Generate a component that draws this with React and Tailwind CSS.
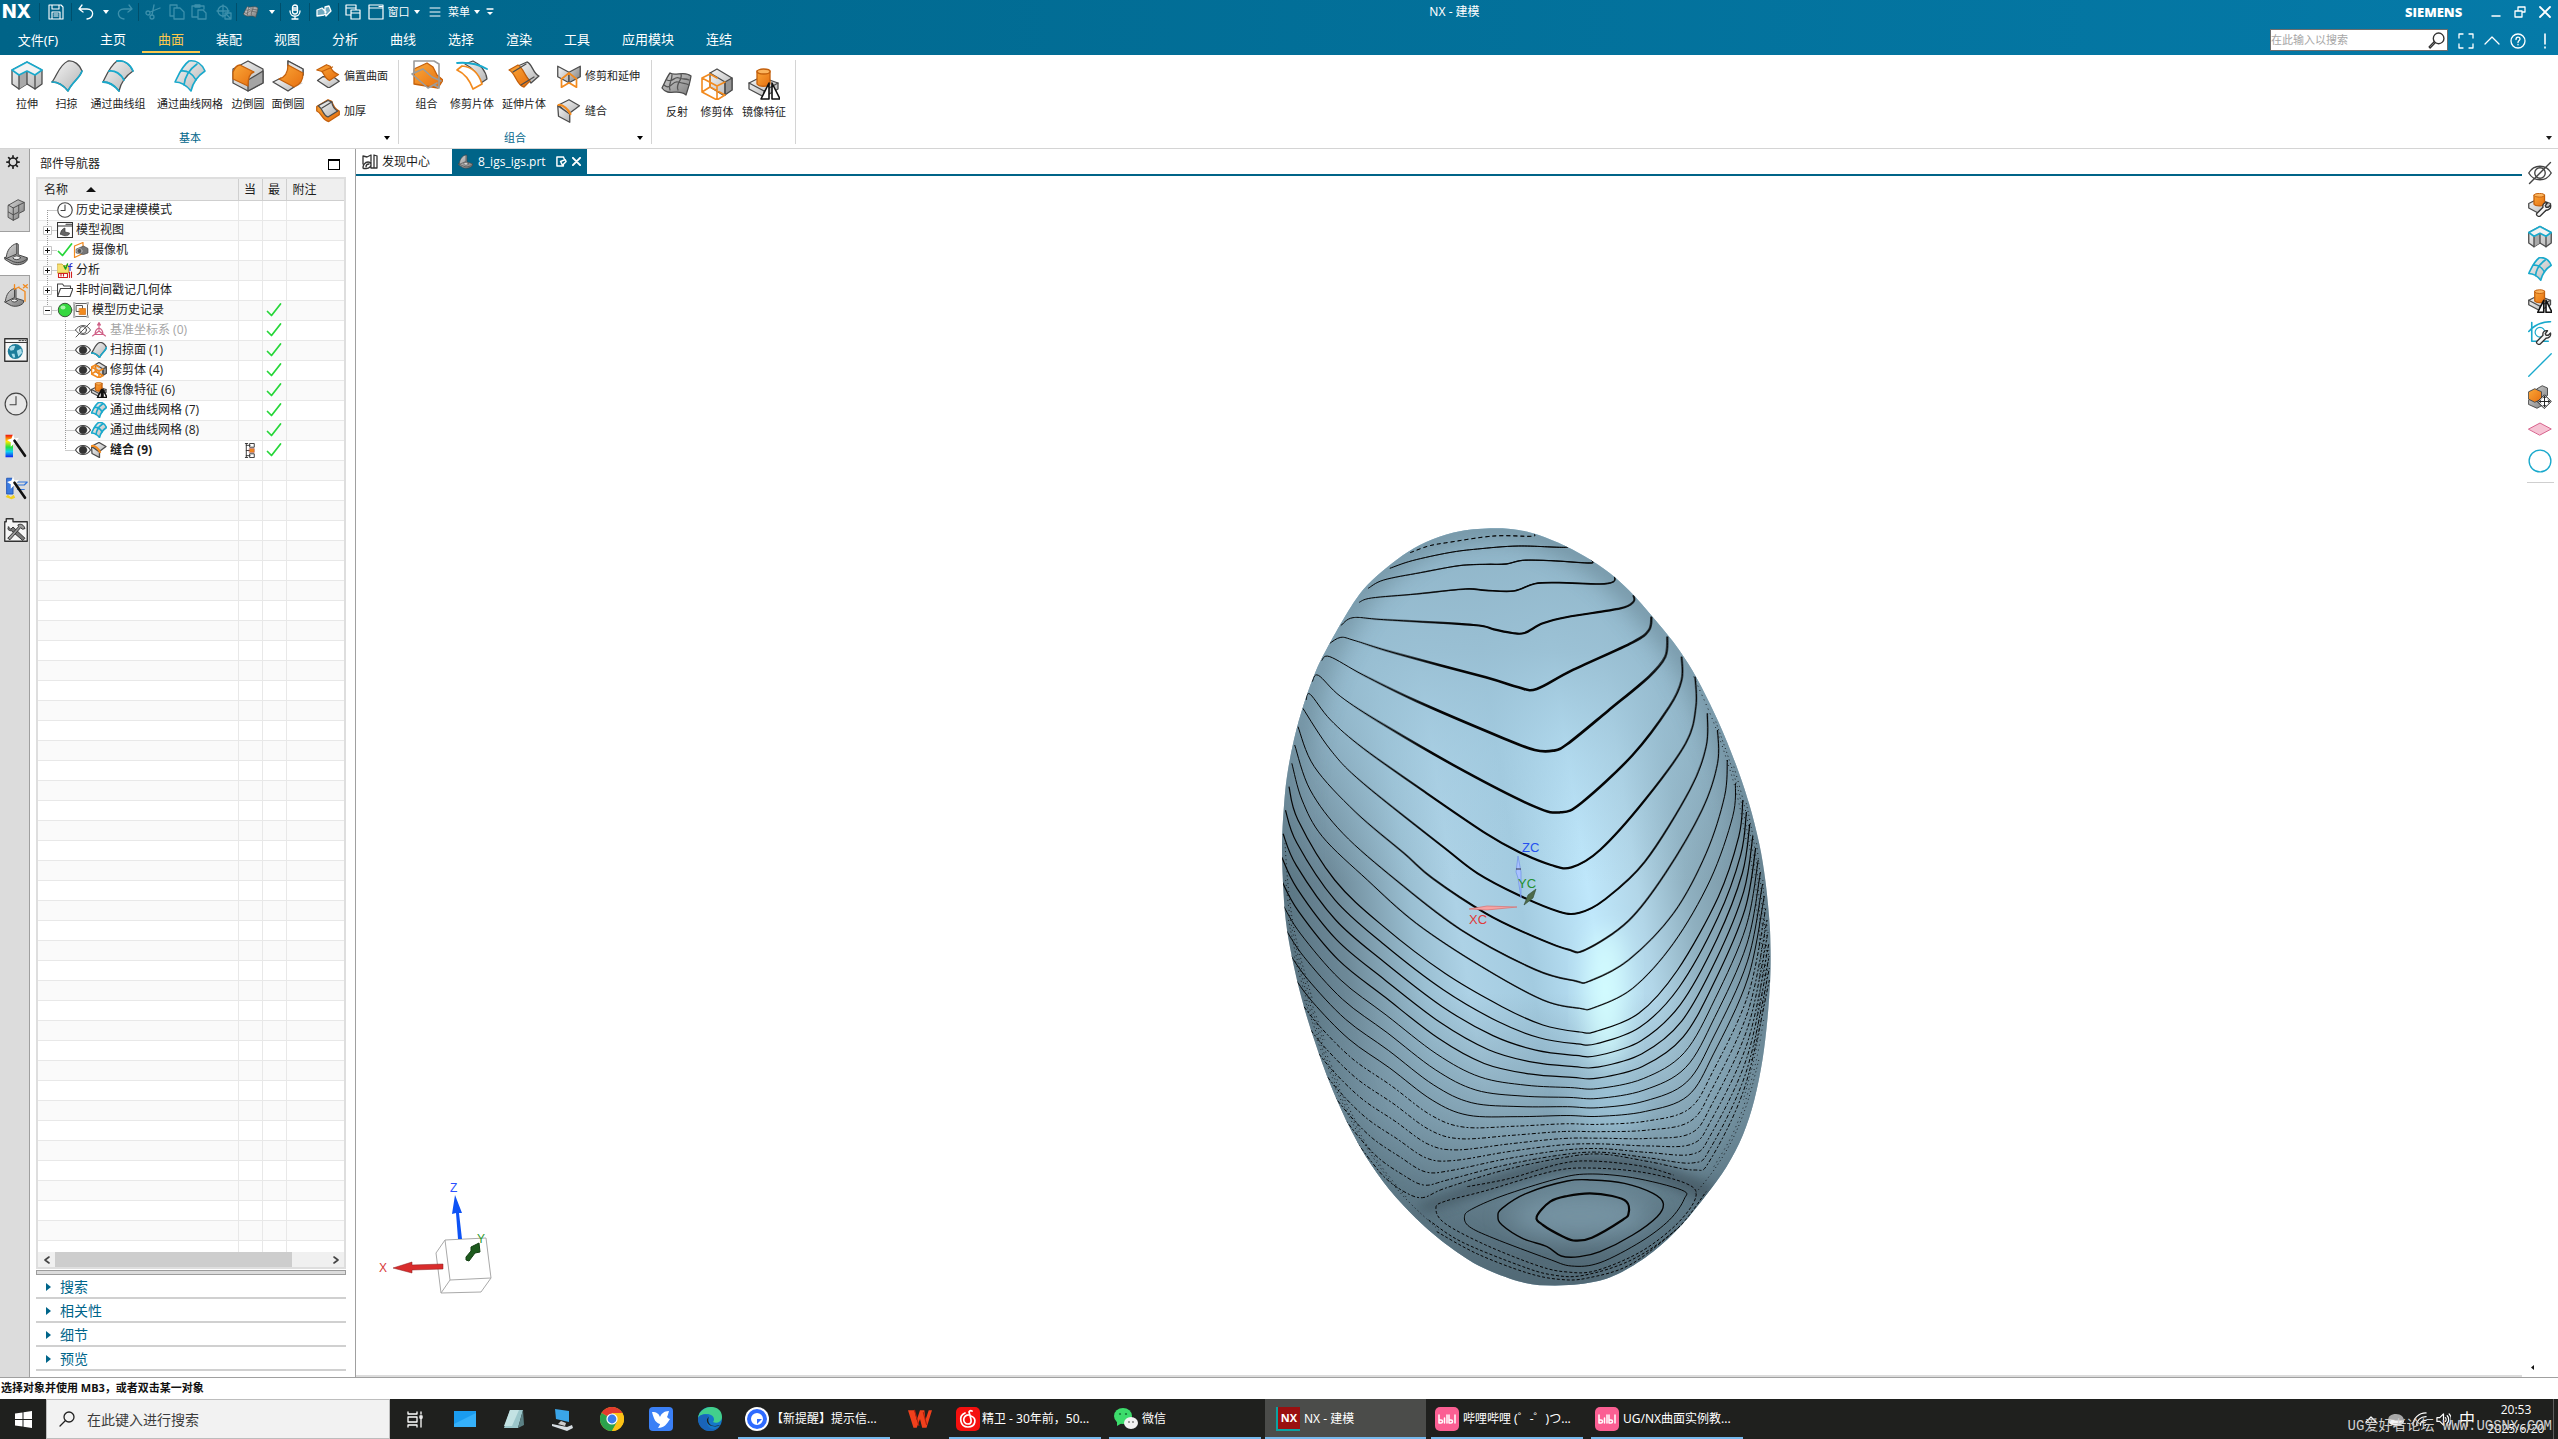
import React from "react";

const DK = "#4c4c4c";
const CY = "#19a9cc";
const OR = "#f28a1e";
const CRISP = "[&_path]:[vector-effect:non-scaling-stroke]";

/* ---------- shared drawing helpers ---------- */

function Svg({ size = 32, w, h, box = 32, children, className = "" }) {
  return (
    <svg
      width={w || size}
      height={h || size}
      viewBox={`0 0 ${box} ${box}`}
      fill="none"
      strokeLinejoin="round"
      strokeLinecap="round"
      strokeWidth="1.3"
      className={`shrink-0 ${className}`}
      aria-hidden="true"
    >
      {children}
    </svg>
  );
}

function Defs() {
  return (
    <svg width="0" height="0" className="absolute" aria-hidden="true">
      <defs>
        <linearGradient id="gg" x1="0" y1="0" x2="1" y2="1">
          <stop offset="0" stopColor="#f6f6f6" />
          <stop offset="1" stopColor="#b4b4b4" />
        </linearGradient>
        <linearGradient id="gd" x1="0" y1="0" x2="1" y2="1">
          <stop offset="0" stopColor="#d5d5d5" />
          <stop offset="1" stopColor="#7c7c7c" />
        </linearGradient>
        <linearGradient id="go" x1="0" y1="0" x2="1" y2="1">
          <stop offset="0" stopColor="#fba738" />
          <stop offset="1" stopColor="#e66f10" />
        </linearGradient>
        <linearGradient id="rain" x1="0" y1="0" x2="0" y2="1">
          <stop offset="0" stopColor="#f01010" />
          <stop offset="0.3" stopColor="#ffe600" />
          <stop offset="0.55" stopColor="#20e040" />
          <stop offset="0.75" stopColor="#10d0f0" />
          <stop offset="1" stopColor="#1020f0" />
        </linearGradient>
      </defs>
    </svg>
  );
}

/* ---------- modelling icons ---------- */

const Extrude = (p) => (
  <Svg {...p}>
    <path d="M1 10L16 2l15 8v14l-7 5-8-5-8 5-7-5z" fill="url(#gg)" stroke={DK} />
    <path d="M8 15l8-4v13l-8 5z" fill="#a9a9a9" />
    <path d="M16 11v13M8 15v14M24 15v14" stroke={DK} />
    <path d="M1 10L16 2l15 8-7 5-8-4-8 4z" fill="#f3f3f3" stroke={CY} strokeWidth="1.6" />
  </Svg>
);
const Sweep = (p) => (
  <Svg {...p}>
    <path d="M1 22C6 16 8 5 17 1c6-1 12 4 14 10-2 7-10 11-14 20-4-5-9-9-16-9z" fill="url(#gg)" stroke={DK} />
    <path d="M1 22c7 0 12 4 16 9C21 22 29 18 31 11" stroke={CY} strokeWidth="1.6" />
  </Svg>
);
const ThroughCurves = (p) => (
  <Svg {...p}>
    <path d="M1 22C5 14 8 6 15 1c7-1 13 3 16 10-6 4-12 11-14 20C13 26 8 22 1 22z" fill="url(#gg)" stroke={DK} />
    <path d="M15 1c7-1 13 3 16 10M7 11c6-1 12 3 15 9M1 22c7 0 12 4 16 9" stroke={CY} strokeWidth="1.8" />
  </Svg>
);
const Mesh = (p) => (
  <Svg {...p}>
    <path d="M1 22C5 14 8 6 15 1c7-1 13 3 16 10-6 4-12 11-14 20C13 26 8 22 1 22z" fill="url(#gg)" stroke={CY} strokeWidth="1.6" />
    <path d="M7 11c6-1 12 3 15 9M23 4c-7 5-12 12-13 21" stroke={CY} strokeWidth="1.6" />
  </Svg>
);
const EdgeBlend = (p) => (
  <Svg {...p}>
    <path d="M1 9L16 1l15 8v14l-15 8-15-8z" fill="url(#gg)" stroke={DK} />
    <path d="M16 31V20l15-9v12z" fill="#a4a4a4" stroke={DK} />
    <path d="M1 12c2-5 4-7 7-7l14 7c-4 1-6 5-6 14L1 19z" fill="url(#go)" stroke="#c4600c" />
  </Svg>
);
const FaceBlend = (p) => (
  <Svg {...p}>
    <path d="M16 19l15 4-15 8-15-8 7-4z" fill="url(#gg)" stroke="none" />
    <path d="M16 6V1l15 8v6M1 22l15 9 6-4M1 22l8-4" stroke={DK} />
    <path d="M16 1l15 8v6L16 6z" fill="#e4e4e4" stroke={DK} />
    <path d="M16 5c0 7-2 12-9 14l15 8c7-3 9-7 9-14z" fill="url(#go)" stroke="#c4600c" />
  </Svg>
);
const Offset = (p) => (
  <Svg {...p}>
    <path d="M2 22l7-5 14 0 8 6-14 9z" fill="url(#gg)" stroke={DK} />
    <path d="M1 8l13-7 5 2c2 6 5 9 11 11l-12 8c-6-2-6-7-10-12z" fill="url(#go)" stroke="#c4600c" />
    <path d="M8 10l14-6" stroke="#c4600c" />
  </Svg>
);
const Thicken = (p) => (
  <Svg {...p}>
    <path d="M1 10L16 1l5 2c2 7 5 11 10 13v5l-14 9c-9-2-9-11-16-14z" fill="url(#go)" stroke="#c4600c" />
    <path d="M3 9L16 2l5 2c1 6 4 10 8 12l-13 8C9 22 10 14 3 9z" fill="url(#gg)" stroke={DK} />
    <path d="M8 12l13-8" stroke={DK} />
  </Svg>
);
const Combine = (p) => (
  <Svg {...p}>
    <path d="M3 9l13-6 6 4 4 8 6 5-5 8-24-4z" fill="url(#go)" stroke="#c4600c" />
    <path d="M3 1h20l5 3v24l-5-3M3 1v12L1 14l8 7 8 7 9-5M3 13l9-4 9 8 9 4" stroke="#9b9b9b" strokeWidth="1.6" />
  </Svg>
);
const TrimSheet = (p) => (
  <Svg {...p}>
    <path d="M9 4l8-3c7 3 13 10 14 18l-6 4C22 14 17 8 9 4z" fill="url(#gg)" stroke={DK} />
    <path d="M1 10l5-4c11 1 17 8 20 18l-9 5C14 21 10 14 1 10z" fill="#fff" stroke={OR} strokeWidth="1.7" />
    <path d="M1 3c11-1 21 1 30 6" stroke={CY} strokeWidth="1.8" />
  </Svg>
);
const ExtendSheet = (p) => (
  <Svg {...p}>
    <path d="M10 6l9-4c5 1 6 12 12 14l-8 7z" fill="url(#gg)" stroke={DK} />
    <path d="M1 10l9-5c5 2 7 12 12 16l-6 6C8 25 8 13 1 10z" fill="url(#go)" stroke="#c4600c" />
    <path d="M5 12l13-8M13 25l13-8" stroke={DK} />
  </Svg>
);
const TrimExtend = (p) => (
  <Svg {...p}>
    <path d="M1 3l15 8v14L1 17z" fill="url(#gg)" stroke={DK} />
    <path d="M31 3l-15 8v14l15-8z" fill="url(#gd)" stroke={DK} />
    <path d="M6 20l10-8 10 8v11l-10-6-10 6z" stroke={OR} strokeWidth="1.7" />
  </Svg>
);
const Sew = (p) => (
  <Svg {...p}>
    <path d="M2 8L16 1l14 8-12 9-3 2z" fill="url(#gg)" stroke={DK} />
    <path d="M1 9l16 11v11L2 23z" fill="url(#gg)" stroke={DK} />
    <path d="M2 8c6-1 13 6 16 12" stroke={OR} strokeWidth="2.2" />
  </Svg>
);
const Reflect = (p) => (
  <Svg {...p}>
    <path d="M1 20C4 14 6 9 9 5c5 4 14-3 21 3-1 7-3 13-5 19C18 20 7 29 1 20z" fill="url(#gd)" stroke={DK} />
    <path d="M3 17c7 6 8-5 14-3s7 1 11 3M6 12c6 3 7-4 12-2s6 0 10 2M11 7c0 6-4 10-2 15M20 6c2 6-6 10-3 16" stroke="#555" />
  </Svg>
);
const TrimBody = (p) => (
  <Svg {...p}>
    <path d="M9 5l7-4 15 9v12l-9 5L9 19z" fill="url(#gg)" stroke={DK} />
    <path d="M24 14l7-4v12l-7 5z" fill="#969696" stroke={DK} />
    <path d="M9 5l15 9v13" stroke={DK} />
    <path d="M1 10l8-4 7 4v0M1 10l15 8 8-4M1 10v14l15 8 8-5M16 18v14M9 19v-9M1 24l8-5 15 8" stroke={OR} strokeWidth="1.6" />
  </Svg>
);
const Mirror = (p) => (
  <Svg {...p}>
    <path d="M1 15l12-6 17 6v6l-14 8-15-8z" fill="url(#gg)" stroke={DK} />
    <path d="M1 15l15 8 14-8M16 23v6" stroke={DK} />
    <path d="M9 3v13c2 3 11 3 13 0V3z" fill="url(#go)" stroke="#c4600c" />
    <ellipse cx="15.500" cy="3.500" rx="6.500" ry="2.500" fill="#fbb45c" stroke="#c4600c" />
    <path d="M21 15v16h-8zM24 15v16h8z" fill="#fff" stroke="#111" strokeWidth="1.6" />
  </Svg>
);
const Wrench = ({ x = 0, y = 0 }) => (
  <path
    transform={`translate(${x} ${y})`}
    d="M1 15l8-8c-1-4 2-7 6-6l-3 4 1 2 3 0 3-3c1 4-2 7-6 7l-8 8c-3 1-6-2-4-4z"
    fill="#f6f6f6"
    stroke="#333"
  />
);
const FeatureWrench = (p) => (
  <Svg {...p}>
    <path d="M1 14l12-6 17 6v6l-14 8-15-8z" fill="url(#gg)" stroke={DK} />
    <path d="M8 3v12c2 3 12 3 14 0V3z" fill="url(#go)" stroke="#c4600c" />
    <ellipse cx="15" cy="3" rx="7" ry="2.500" fill="#fbb45c" stroke="#c4600c" />
    <Wrench x={11} y={12} />
  </Svg>
);
const SketchWrench = (p) => (
  <Svg {...p}>
    <path d="M5 2v25h22M1 14C8 6 18 1 30 1" stroke={CY} strokeWidth="1.6" />
    <circle cx="16" cy="15" r="6.500" stroke={CY} strokeWidth="1.6" />
    <Wrench x={11} y={12} />
  </Svg>
);
const MoveFace = (p) => (
  <Svg {...p}>
    <path d="M1 20l8-4 12 4v6l-9 5-11-5zM12 5l7-4 7 3v10l-8 4z" fill="url(#gd)" stroke={DK} />
    <path d="M1 9l8-4 9 4v10l-9 4-8-4z" fill="url(#go)" stroke={DK} />
    <path d="M13 22l9-9 9 9-9 9z" fill="#fff" stroke="#222" />
    <path d="M22 15v14M15 22h14M20 17l2-2 2 2M20 27l2 2 2-2M17 20l-2 2 2 2M27 20l2 2-2 2" stroke="#222" />
  </Svg>
);
const EyeOff = ({ size = 24 }) => (
  <Svg size={size}>
    <path d="M1 16C8 4 24 4 31 16 24 28 8 28 1 16z" fill="#fff" stroke="#444" strokeWidth="1.8" />
    <circle cx="16" cy="16" r="7" stroke="#444" strokeWidth="1.8" />
    <path d="M30 2L2 30" stroke="#444" strokeWidth="1.8" />
  </Svg>
);
const Eye = () => (
  <Svg size={16}>
    <path d="M1 16C8 4 24 4 31 16 24 28 8 28 1 16z" fill="#fff" stroke="#444" strokeWidth="2.2" />
    <circle cx="16" cy="16" r="7.500" fill="#333" stroke="#333" />
  </Svg>
);
const Bracket = (p) => (
  <Svg {...p}>
    <path d="M3 20C4 11 9 4 17 2l2 1v14l12 4v3c-4 7-16 8-22 4l-8-5v-2z" fill="url(#gd)" stroke="#444" />
    <path d="M17 2v14L3 22M31 22c-5 6-15 7-21 3L1 21" stroke="#444" />
    <ellipse cx="17" cy="21" rx="5" ry="2.500" fill="#eee" stroke="#444" />
  </Svg>
);
const Datum = () => (
  <Svg size={16}>
    <path d="M16 2v16M16 18L3 28M16 18l13 10M16 1l-3 5h6zM16 12c-5 2-8 8-8 13h16c0-5-3-11-8-13" stroke="#cf5f86" strokeWidth="2.200" />
  </Svg>
);
const Check = () => (
  <Svg size={16}>
    <path d="M3 19l8 8L29 4" stroke="#27d63a" strokeWidth="3.500" />
  </Svg>
);
const Clock = ({ size = 16 }) => (
  <Svg size={size}>
    <circle cx="16" cy="16" r="14.500" stroke="#444" strokeWidth={size > 16 ? 1.5 : 2.2} fill="#ffffff55" />
    <path d="M16 6v11H8" stroke="#444" strokeWidth={size > 16 ? 1.5 : 2.2} />
  </Svg>
);

/* ---------- title bar ---------- */

const W = "#fff";
const DIM = "#3c90ac";
const Sep = () => <span className="h-[18px] w-px bg-[#004f6c]" />;
const Caret = ({ className = "w-3" }) => (
  <span className={`flex justify-center ${className}`}>
    <svg width="6" height="4" viewBox="0 0 6 4" aria-hidden="true">
      <path d="M0 0h6L3 4z" fill="currentColor" />
    </svg>
  </span>
);
function Tool({ className, label, children }) {
  return (
    <button type="button" aria-label={label} className={`flex h-6 items-center justify-center ${className}`}>
      {children}
    </button>
  );
}

function TitleBar() {
  return (
    <div className="flex h-6 items-center text-[11px]">
      <span className="w-[39px] pl-[2px] font-['Inter'] text-[19px] font-extrabold leading-6">NX</span>
      <Sep />
      <Tool label="保存" className="w-[31px]">
        <Svg size={16} box={16}><path d="M1 1h12l2 2v12H1zM4 1v4h7V1M4 8h8v7H4zM6 10h4M6 12h4" stroke={W} strokeWidth="1.100" /></Svg>
      </Tool>
      <Sep />
      <Tool label="撤销" className="w-7">
        <Svg size={16} box={16}><path d="M4 1L1 5l4 3M1 5h8c8 0 7 9 0 10" stroke={W} /></Svg>
      </Tool>
      <Caret className="w-3" />
      <Tool label="重做" className="w-[26px]">
        <Svg size={16} box={16}><path d="M12 1l3 4-4 3M15 5H7c-8 0-7 9 0 10" stroke={DIM} /></Svg>
      </Tool>
      <Sep />
      <Tool label="剪切" className="w-7">
        <Svg size={16} box={16}><path d="M15 4L5 8M9 1L7 11" stroke={DIM} /><circle cx="3" cy="9" r="2" stroke={DIM} /><circle cx="7" cy="13" r="2" stroke={DIM} /></Svg>
      </Tool>
      <Tool label="复制" className="w-5">
        <Svg size={16} box={16}><path d="M5 12H1V1h7v3M5 4h6l4 4v7H5z" stroke={DIM} /></Svg>
      </Tool>
      <Tool label="粘贴" className="w-6">
        <Svg size={16} box={16}><path d="M6 13H1V2h12v3M4 2V1h5v2H4zM7 6h5l3 3v6H7z" stroke={DIM} /></Svg>
      </Tool>
      <Tool label="重复命令" className="w-[25px]">
        <Svg size={16} box={16}><circle cx="7" cy="7" r="5" stroke={DIM} /><path d="M7 1v12M1 7h12M9 9h6v6H9zM11 11l3 3" stroke={DIM} /></Svg>
      </Tool>
      <Sep />
      <Tool label="反射" className="w-[27px]"><Reflect size={16} /></Tool>
      <Caret className="w-4" />
      <Sep />
      <Tool label="语音" className="w-7">
        <Svg size={16} box={16}><rect x="5.500" y="1" width="5" height="9" rx="2.500" stroke={W} /><path d="M3 7c0 7 10 7 10 0M8 12v3M5 15h6M6 4h4M6 6h4" stroke={W} /></Svg>
      </Tool>
      <Sep />
      <Tool label="触控" className="w-7">
        <Svg size={16} box={16}><path d="M1 6l5-2 4 4-2 3-7 1zM9 3l4-1 2 5-5 5-1-4z" fill="#6fa9c0" stroke={W} /></Svg>
      </Tool>
      <Sep />
      <Tool label="切换窗口" className="w-7">
        <Svg size={16} box={16}><path d="M5 11H1V1h10v5M1 4h10M6 6h9v9H6zM6 9h9" stroke={W} strokeWidth="1.200" /></Svg>
      </Tool>
      <button type="button" className="flex h-6 items-center">
        <span className="flex w-[18px] justify-center">
          <Svg size={16} box={16}><path d="M1 1h14v14H1zM1 4h14M11 2.500h3" stroke={W} strokeWidth="1.200" /></Svg>
        </span>
        <span className="w-[27px] text-center">窗口</span>
        <Caret className="w-[10px]" />
      </button>
      <button type="button" className="flex h-6 items-center">
        <span className="flex w-[26px] justify-center">
          <Svg size={12} box={12}><path d="M1 2h10M1 6h10M1 10h10" stroke={W} strokeWidth="1" /></Svg>
        </span>
        <span className="w-[22px]">菜单</span>
        <Caret className="w-[14px]" />
      </button>
      <Tool label="工具条选项" className="w-3">
        <Svg size={8} box={8}><path d="M1 1h6" stroke={W} /><path d="M1 4h6L4 7z" fill={W} /></Svg>
      </Tool>
      <div className="flex-1 pl-2 text-center text-[12px]">NX - 建模</div>
      <span className="w-[79px] font-['Open_Sans'] text-[13px] font-extrabold leading-5">SIEMENS</span>
      <Tool label="最小化" className="w-6">
        <Svg size={10} box={10}><path d="M1 9h8" stroke={W} strokeWidth="1.500" /></Svg>
      </Tool>
      <Tool label="还原" className="w-6">
        <Svg size={12} box={12}><path d="M4 4V1h7v5H9M1 5h7v6H1z" stroke={W} /></Svg>
      </Tool>
      <Tool label="关闭" className="w-[26px]">
        <Svg size={12} box={12}><path d="M1 1l10 10M11 1L1 11" stroke={W} strokeWidth="1.800" /></Svg>
      </Tool>
    </div>
  );
}

function MenuTabs() {
  const tabs = ["主页", "曲面", "装配", "视图", "分析", "曲线", "选择", "渲染", "工具", "应用模块", "连结"];
  return (
    <nav className="flex h-[31px] text-[13px]">
      <button type="button" className="h-[29px] w-[84px] pr-2 pt-1">文件(F)</button>
      {tabs.map((t) => (
        <button
          key={t}
          type="button"
          className={`h-[29px] border-b-2 pt-1 ${t.length > 2 ? "w-[84px]" : "w-[58px]"} ${
            t === "曲面" ? "border-[#fcc84c] text-[#fcc84c]" : "border-transparent"
          }`}
        >
          {t}
        </button>
      ))}
      <div className="ml-auto flex items-start pt-[5px]">
        <label className="flex h-[22px] w-[178px] items-center border border-[#6d6d6d] bg-white pr-[2px]">
          <input
            aria-label="搜索命令"
            placeholder="在此输入以搜索"
            className="w-full min-w-0 flex-1 bg-transparent text-[11px] leading-4 text-black outline-none placeholder:text-[#a6a6a6]"
          />
          <Svg size={17} box={16}><circle cx="10" cy="6" r="5" stroke="#333" /><path d="M6 9l-5 5 1 1 5-5" stroke="#333" /></Svg>
        </label>
        <Tool label="全屏" className="ml-1 w-7">
          <Svg size={16} box={16}><path d="M1 5V1h4M11 1h4v4M15 11v4h-4M5 15H1v-4" stroke={W} /></Svg>
        </Tool>
        <Tool label="折叠功能区" className="w-6">
          <Svg size={16} box={16}><path d="M1 11l7-7 7 7" stroke={W} /></Svg>
        </Tool>
        <Tool label="帮助" className="w-7">
          <Svg size={16} box={16}><circle cx="8" cy="8" r="7" stroke={W} /><path d="M6 6.500c0-3 4-3 4-.5 0 1.500-2 1.500-2 3.500M8 11.500v.3" stroke={W} /></Svg>
        </Tool>
        <Tool label="通知" className="w-[26px]">
          <Svg size={16} box={16}><path d="M8 1v10M8 14v1" stroke={W} strokeWidth="1.600" /></Svg>
        </Tool>
      </div>
    </nav>
  );
}

/* ---------- ribbon ---------- */

function Big({ icon: Icon, label, className }) {
  return (
    <button type="button" className={`flex shrink-0 flex-col items-center ${className}`}>
      <Icon size={32} />
      <span className="mt-1 whitespace-nowrap leading-4">{label}</span>
    </button>
  );
}
function Small({ icon: Icon, label }) {
  return (
    <button type="button" className="flex h-[35px] items-center gap-1">
      <Icon size={24} className={CRISP} />
      <span className="whitespace-nowrap leading-4">{label}</span>
    </button>
  );
}
function Group({ title, className, children, top = "pt-0" }) {
  return (
    <section className={`relative flex h-[84px] flex-col border-r border-[#d4d4d4] ${className}`}>
      <div className={`flex flex-1 items-start ${top}`}>{children}</div>
      {title && (
        <div className="flex h-3 items-center leading-4 text-[#00658a]">
          <span className="flex-1 text-center">{title}</span>
          <button type="button" aria-label={`${title}选项`} className="absolute bottom-0 right-[8px] h-3 text-black">
            <Caret className="w-[6px]" />
          </button>
        </div>
      )}
    </section>
  );
}

function Ribbon() {
  return (
    <div className="flex h-[94px] items-start border-b border-[#d4d4d4] bg-white pt-[5px] text-[11px] text-[#1c1c1c]">
      <Group title="基本" className="w-[399px] pl-[9px] pr-[27px]">
        <Big icon={Extrude} label="拉伸" className="w-9" />
        <Big icon={Sweep} label="扫掠" className="w-[43px]" />
        <Big icon={ThroughCurves} label="通过曲线组" className="w-[60px]" />
        <Big icon={Mesh} label="通过曲线网格" className="w-[84px]" />
        <Big icon={EdgeBlend} label="边倒圆" className="w-8" />
        <Big icon={FaceBlend} label="面倒圆" className="w-12" />
        <div className="-mt-[2px] ml-1 flex shrink-0 flex-col">
          <Small icon={Offset} label="偏置曲面" />
          <Small icon={Thicken} label="加厚" />
        </div>
      </Group>
      <Group title="组合" className="w-[253px] pl-[7px] pr-[27px]">
        <Big icon={Combine} label="组合" className="w-[41px]" />
        <Big icon={TrimSheet} label="修剪片体" className="w-[50px]" />
        <Big icon={ExtendSheet} label="延伸片体" className="w-[54px]" />
        <div className="-mt-[2px] ml-[6px] flex shrink-0 flex-col">
          <Small icon={TrimExtend} label="修剪和延伸" />
          <Small icon={Sew} label="缝合" />
        </div>
      </Group>
      <Group className="w-[144px] pl-[7px]" top="pt-2">
        <Big icon={Reflect} label="反射" className="w-9" />
        <Big icon={TrimBody} label="修剪体" className="w-[44px]" />
        <Big icon={Mirror} label="镜像特征" className="w-[50px]" />
      </Group>
      <button type="button" aria-label="功能区选项" className="ml-auto mt-[76px] pr-[6px]">
        <Caret className="w-[6px]" />
      </button>
    </div>
  );
}

/* ---------- left resource rail ---------- */

function RailButton({ label, className, active, children }) {
  return (
    <button
      type="button"
      aria-label={label}
      className={`flex w-[30px] shrink-0 items-center justify-center ${active ? "border-y border-[#a0a0a0] bg-white pl-px" : "border-r border-[#a0a0a0]"} ${className}`}
    >
      {children}
    </button>
  );
}
const RailGap = ({ className }) => <span className={`w-[30px] border-r border-[#a0a0a0] ${className}`} />;
const Wand = () => <path d="M14 9l14 20" stroke="#111" strokeWidth="3.500" />;
const Spark = () => <path d="M12 0l2 6 6-1-4 5 3 5-6-2-4 4 0-6-5-3 6-2z" fill="#fff" />;

function Rail() {
  return (
    <div className="flex w-[30px] shrink-0 flex-col bg-[#dcdcdc]">
      <RailButton label="设置" className="h-[26px] pr-1">
        <Svg size={14} box={16}>
          <circle cx="8" cy="8" r="4.500" stroke="#222" strokeWidth="1.800" />
          <path d="M8 1v2M8 13v2M1 8h2M13 8h2M3 3l1.500 1.500M11.500 11.500L13 13M3 13l1.500-1.500M11.500 4.500L13 3" stroke="#222" strokeWidth="2" />
        </Svg>
      </RailButton>
      <RailGap className="h-[14px]" />
      <RailButton label="装配导航器" className="h-[42px] pl-[2px]">
        <Svg size={22}>
          <path d="M5 9l14-8 9 4v12l-8 4v6l-8 4-7-4z" fill="url(#gd)" stroke="#444" />
          <path d="M5 9l7 4 16-8M12 13v18M5 19l7 4 8-4V9" stroke="#444" />
        </Svg>
      </RailButton>
      <RailButton label="部件导航器" active className="h-[45px]"><Bracket size={24} /></RailButton>
      <RailButton label="约束导航器" className="h-10 pl-[2px]">
        <Svg size={24}>
          <path d="M2 22C3 14 7 8 14 6l2 1v12l10 3v3c-4 5-13 6-18 3l-7-4z" fill="url(#gd)" stroke="#444" />
          <path d="M14 6v12L2 24" stroke="#444" />
          <ellipse cx="14" cy="22" rx="4" ry="2" fill="#eee" stroke="#444" />
          <path d="M14 1v6l6-3M20 5l8 5v13M26 1l5 4M31 1l-5 4" stroke={OR} strokeWidth="1.800" />
        </Svg>
      </RailButton>
      <RailGap className="h-3" />
      <RailButton label="Web 浏览器" className="h-11 pl-[2px]">
        <Svg size={24}>
          <path d="M1 1h30v30H1z" fill="#f6f6f6" stroke="#333" strokeWidth="1.800" />
          <path d="M1 6h30M20 3.500h2M24 3.500h2M28 3.500h1" stroke="#333" />
          <circle cx="15" cy="18" r="10" fill="#1c7c9a" />
          <path d="M7 14c3-4 6-4 8-3l-2 5-4 1zM17 17l6-3 1 6-5 5zM10 21l4 0 1 5-3 0z" fill="#a8dcea" />
        </Svg>
      </RailButton>
      <RailGap className="h-[10px]" />
      <RailButton label="历史记录" className="h-11 pl-[2px]"><Clock size={24} /></RailButton>
      <RailButton label="加工向导" className="h-10 pl-[2px]">
        <Svg size={24}>
          <rect x="2" y="1" width="10" height="30" fill="url(#rain)" stroke="none" />
          <Spark /><Wand />
        </Svg>
      </RailButton>
      <RailButton label="流程向导" className="h-11 pl-[2px]">
        <Svg size={24}>
          <path d="M4 3h8v21H4z" fill="#3b7be0" stroke="#2458b8" />
          <path d="M16 8h15l-4 4h-9M18 18h9" stroke="#2f74dc" strokeWidth="1.600" />
          <path d="M2 28l3-3 4 3 4-3 2 4-5 2z" fill="#f0d020" />
          <Spark /><Wand />
        </Svg>
      </RailButton>
      <RailButton label="角色" className="h-10 pl-[2px]">
        <Svg size={24}>
          <path d="M1 5h2V1h9v4h19v26H1z" fill="#f6f6f6" stroke="#333" strokeWidth="1.800" />
          <path d="M6 12l3 3 3-3 16 15-3 3L10 17c-4 0-6-2-4-5z" fill="#777" stroke="#333" />
          <path d="M19 9c4-2 7 0 9 5l-3 1-3-2L8 29l-3-2 14-15z" fill="#999" stroke="#333" />
        </Svg>
      </RailButton>
      <RailGap className="flex-1" />
    </div>
  );
}

/* ---------- part navigator ---------- */

const ViewsIcon = () => (
  <Svg size={16}>
    <path d="M1 1h30v30H1zM1 8h30M18 4.500h11" fill="#fff" stroke="#333" strokeWidth="2.200" />
    <path d="M7 24c0-6 4-11 9-12v8l9 2c0 6-10 8-18 2z" fill="#666" stroke="#333" />
  </Svg>
);
const CameraIcon = () => (
  <Svg size={16}>
    <path d="M3 8L20 1v22L3 31z" fill="#fff" stroke={OR} strokeWidth="2.400" />
    <path d="M7 14l14-6 9 5v9l-9 3-14-3z" fill="#777" stroke="#444" />
    <circle cx="13" cy="18" r="5" fill="#555" stroke="#ccc" />
  </Svg>
);
const AnalysisIcon = () => (
  <Svg size={16}>
    <path d="M1 4h9l3 3h10v15H1z" fill="#f7e070" stroke="#b89010" />
    <path d="M14 8l3 6 4-10" stroke="#1aa01a" strokeWidth="3" />
    <path d="M30 3c-5 0-4 4-4 14M23 9h7" stroke="#2030d0" strokeWidth="2.400" />
    <path d="M3 23h18v8H3zM8 23v5M13 23v5M25 20v11M29 20v11" stroke="#d02020" strokeWidth="2.200" />
  </Svg>
);
const FolderIcon = () => (
  <Svg size={16}>
    <path d="M1 29V4h10l3 4h13v5M1 29l6-16h25l-6 16z" stroke="#444" strokeWidth="2.200" />
  </Svg>
);
const HistoryIcon = () => (
  <Svg size={16}>
    <path d="M3 3h26v26H3z" stroke="#555" strokeWidth="1.800" />
    <path d="M0 0h5v5H0zM27 0h5v5h-5zM0 27h5v5H0zM27 27h5v5h-5z" fill="#bbb" stroke="none" />
    <path d="M7 7h12v12H7z" stroke="#555" strokeWidth="2" />
    <path d="M13 13h12v12H13z" fill={OR} stroke="#d06a08" />
  </Svg>
);
const GreenBall = () => (
  <Svg size={16}>
    <circle cx="16" cy="16" r="13.500" fill="#35d83f" stroke="#3b5a3b" strokeWidth="2" />
    <ellipse cx="12" cy="11" rx="5" ry="4" fill="#a8f5a8" />
  </Svg>
);

/* Dotted guide lines of the tree, with an optional expander box. */
function Guide({ up, down, box }) {
  return (
    <svg width="19" height="20" viewBox="0 0 19 20" className="shrink-0" aria-hidden="true">
      <path
        d={`${up ? "M9.500 0V10" : ""}${down ? "M9.500 10V20" : ""}M9.500 10.500H19`}
        stroke="#999"
        strokeDasharray="1 1"
        fill="none"
      />
      {box && (
        <>
          <path d="M5.500 6.500h8v8h-8z" fill="#fff" stroke="#c4c4c4" />
          <path d={box === "+" ? "M7 10.500h5M9.500 8v5" : "M7 10.500h5"} stroke="#111" />
        </>
      )}
    </svg>
  );
}

const rows = [
  { t: "历史记录建模模式", g: { down: true }, i: [Clock] },
  { t: "模型视图", g: { up: true, down: true, box: "+" }, i: [ViewsIcon] },
  { t: "摄像机", g: { up: true, down: true, box: "+" }, i: [Check, CameraIcon] },
  { t: "分析", g: { up: true, down: true, box: "+" }, i: [AnalysisIcon] },
  { t: "非时间戳记几何体", g: { up: true, down: true, box: "+" }, i: [FolderIcon] },
  { t: "模型历史记录", g: { up: true, box: "-" }, i: [GreenBall, HistoryIcon], ok: true },
  { t: "基准坐标系 (0)", sub: true, i: [EyeOff, Datum], ok: true, off: true },
  { t: "扫掠面 (1)", sub: true, i: [Eye, Sweep], ok: true },
  { t: "修剪体 (4)", sub: true, i: [Eye, TrimBody], ok: true },
  { t: "镜像特征 (6)", sub: true, i: [Eye, Mirror], ok: true },
  { t: "通过曲线网格 (7)", sub: true, i: [Eye, Mesh], ok: true },
  { t: "通过曲线网格 (8)", sub: true, i: [Eye, Mesh], ok: true },
  { t: "缝合 (9)", sub: true, i: [Eye, Sew], ok: true, bold: true, last: true },
];

function Navigator() {
  const blanks = Array.from({ length: 40 });
  return (
    <aside className="flex w-[326px] shrink-0 flex-col border-r border-[#a0a0a0] bg-white pl-[6px] pr-[9px] text-[12px] text-[#1c1c1c]">
      <header className="flex h-7 items-center justify-between pl-1 pr-[6px] pt-[2px]">
        <h2>部件导航器</h2>
        <button type="button" aria-label="最大化" className="h-[11px] w-3 border border-t-2 border-black" />
      </header>
      <div className="flex min-h-0 flex-1 flex-col border-2 border-[#dedede]">
        <div className="min-h-0 flex-1 basis-0 overflow-hidden">
          <table className="w-full table-fixed border-collapse">
            <colgroup>
              <col className="w-[200px]" />
              <col className="w-6" />
              <col className="w-6" />
              <col />
            </colgroup>
            <thead>
              <tr className="h-[21px] border-b border-[#cfcfcf] bg-[#efefef] text-left">
                <th className="border-r border-[#cfcfcf] pl-[6px] pt-px font-normal leading-4">
                  <span className="flex items-center gap-[18px]">
                    名称
                    <svg width="10" height="5" viewBox="0 0 10 5" aria-hidden="true"><path d="M0 5h10L5 0z" fill="#111" /></svg>
                  </span>
                </th>
                <th className="border-r border-[#cfcfcf] pt-px text-center font-normal leading-4">当</th>
                <th className="border-r border-[#cfcfcf] pt-px text-center font-normal leading-4">最</th>
                <th className="pl-[6px] pt-px font-normal leading-4">附注</th>
              </tr>
            </thead>
            <tbody>
              {rows.map((r) => (
                <tr key={r.t} className="h-5 border-b border-[#e8e8e8] even:bg-[#fafafa]">
                  <td className="border-r border-[#e8e8e8] p-0">
                    <div className="flex h-[19px] items-center">
                      {r.sub ? <span className="w-[18px]" /> : <Guide {...r.g} />}
                      {r.sub && <Guide up down={!r.last} />}
                      {r.i.map((Ic, n) => (
                        <Ic key={n} size={16} className={CRISP} />
                      ))}
                      <span
                        className={`ml-[3px] whitespace-nowrap font-['Open_Sans','Noto_Sans_CJK_SC'] leading-4 ${r.off ? "text-[#a5a5a5]" : ""} ${r.bold ? "font-bold" : ""}`}
                      >
                        {r.t}
                      </span>
                    </div>
                  </td>
                  <td className="border-r border-[#e8e8e8] p-0">
                    {r.bold && (
                      <span className="flex justify-center">
                        <Svg size={15}>
                          <path d="M7 1v30M7 5h8M7 16h8M7 27h8M15 1h9v8h-9zM15 23h9v8h-9zM5 1h5M5 31h5" stroke="#333" strokeWidth="2" />
                          <path d="M14 12h10v8H14z" fill={OR} stroke="#a55" />
                        </Svg>
                      </span>
                    )}
                  </td>
                  <td className="border-r border-[#e8e8e8] p-0">
                    <span className="flex justify-center">{r.ok && <Check />}</span>
                  </td>
                  <td className="p-0" />
                </tr>
              ))}
              {blanks.map((_, n) => (
                <tr key={n} className="h-5 border-b border-[#e8e8e8] even:bg-[#fafafa]">
                  <td className="border-r border-[#e8e8e8] p-0" />
                  <td className="border-r border-[#e8e8e8] p-0" />
                  <td className="border-r border-[#e8e8e8] p-0" />
                  <td className="p-0" />
                </tr>
              ))}
            </tbody>
          </table>
        </div>
        <div className="flex h-[15px] shrink-0 items-stretch bg-[#f0f0f0]">
          <button type="button" aria-label="向左滚动" className="flex w-[17px] items-center justify-center">
            <Svg size={8} box={8}><path d="M6 1L2 4l4 3" stroke="#444" strokeWidth="1.600" /></Svg>
          </button>
          <div className="flex-1"><div className="h-full w-[87%] bg-[#cdcdcd]" /></div>
          <button type="button" aria-label="向右滚动" className="flex w-[17px] items-center justify-center">
            <Svg size={8} box={8}><path d="M2 1l4 3-4 3" stroke="#444" strokeWidth="1.600" /></Svg>
          </button>
        </div>
      </div>
      <div className="mt-px h-[5px] shrink-0 border border-[#9c9c9c] bg-[#dcdcdc]" />
      {["搜索", "相关性", "细节", "预览"].map((s) => (
        <button
          key={s}
          type="button"
          className="flex h-6 shrink-0 items-center gap-[9px] border-b-2 border-[#d0d0d0] pl-[10px] pt-[2px] text-[14px] leading-5 text-[#00658a]"
        >
          <svg width="5" height="8" viewBox="0 0 5 8" aria-hidden="true"><path d="M0 0l5 4-5 4z" fill="#00658a" /></svg>
          {s}
        </button>
      ))}
      <div className="h-[6px] shrink-0" />
    </aside>
  );
}

/* ---------- reflection-analysed body ---------- */

const outline = [
  [720, 85], [780, 90], [830, 105], [895, 138], [960, 182], [1015, 230], [1062, 285], [1105, 345], [1165, 435], [1215, 530],
  [1270, 665], [1315, 800], [1345, 910], [1370, 1030], [1385, 1140], [1395, 1260], [1398, 1350], [1397, 1440], [1390, 1560],
  [1378, 1680], [1358, 1800], [1330, 1905], [1290, 2000], [1240, 2085], [1180, 2175], [1110, 2255], [1030, 2318], [960, 2347],
  [870, 2357], [790, 2347], [700, 2307], [640, 2265], [560, 2190], [480, 2092], [420, 1995], [370, 1890], [320, 1755],
  [280, 1620], [250, 1500], [225, 1370], [210, 1260], [203, 1140], [201, 1030], [205, 930], [213, 830], [230, 720], [255, 610],
  [285, 510], [320, 425], [370, 320], [410, 255], [460, 200], [510, 155], [570, 118], [640, 93],
];

const bands = [
  { w: 1, d: "4 3", p: [[515, 158], [560, 138], [610, 127], [720, 108], [810, 109], [820, 103]] },
  { w: 1, p: [[465, 205], [520, 182], [610, 158], [680, 147], [780, 138], [895, 142], [890, 132]] },
  { w: 1.3, p: [[412, 265], [450, 240], [540, 218], [635, 197], [700, 193], [750, 192], [790, 181], [860, 182], [950, 189], [962, 184], [948, 168]] },
  { w: 1.6, p: [[390, 307], [420, 294], [530, 282], [650, 267], [700, 271], [768, 273], [820, 251], [880, 248], [980, 252], [1013, 245], [1016, 230]] },
  { w: 2.2, p: [[345, 377], [375, 353], [450, 359], [670, 375], [720, 388], [765, 399], [795, 399], [840, 370], [900, 351], [1030, 325], [1062, 305], [1062, 286]] },
  { w: 2.6, p: [[318, 430], [345, 412], [380, 422], [480, 460], [700, 532], [780, 562], [825, 567], [910, 512], [1060, 427], [1100, 390], [1106, 350]] },
  { w: 2.7, p: [[298, 482], [318, 470], [400, 525], [530, 603], [740, 713], [820, 750], [865, 752], [900, 732], [1000, 632], [1100, 530], [1140, 470], [1145, 410]] },
  { w: 2.5, p: [[275, 545], [290, 526], [345, 590], [450, 674], [650, 815], [820, 920], [883, 937], [935, 908], [1060, 765], [1150, 620], [1180, 540], [1180, 470]] },
  { w: 2.2, p: [[260, 600], [270, 583], [320, 660], [400, 745], [550, 875], [700, 1000], [780, 1055], [860, 1095], [910, 1102], [980, 1050], [1090, 900], [1190, 730], [1215, 620], [1213, 530]] },
  { w: 2, p: [[252, 625], [320, 750], [400, 850], [600, 1045], [680, 1120], [780, 1185], [880, 1235], [930, 1238], [990, 1200], [1090, 1085], [1200, 870], [1240, 740], [1243, 640]] },
  { w: 2, p: [[240, 680], [280, 800], [380, 935], [500, 1060], [570, 1135], [700, 1240], [800, 1300], [900, 1348], [945, 1349], [1050, 1262], [1140, 1120], [1230, 930], [1268, 790], [1268, 690]] },
  { w: 1.8, p: [[232, 735], [270, 870], [350, 1000], [480, 1140], [640, 1290], [820, 1408], [920, 1443], [955, 1443], [1050, 1380], [1160, 1240], [1240, 1060], [1285, 890], [1292, 780]] },
  { w: 1.6, p: [[225, 790], [250, 900], [300, 1010], [410, 1140], [530, 1270], [690, 1400], [840, 1500], [930, 1525], [965, 1523], [1060, 1465], [1160, 1330], [1250, 1140], [1305, 950], [1312, 850]] },
];

/* The lower bands blend from the first curve into the last one. */
const bandA = [[218, 860], [240, 960], [330, 1140], [450, 1280], [600, 1420], [740, 1520], [840, 1575], [930, 1596], [970, 1594], [1075, 1540], [1170, 1410], [1270, 1190], [1320, 1010], [1330, 900]];
const bandB = [[380, 1920], [420, 1985], [455, 2035], [500, 2075], [545, 2093], [600, 2065], [740, 2012], [880, 1975], [980, 1962], [1100, 1985], [1210, 2010], [1250, 1980], [1335, 1760], [1395, 1440]];
const STEPS = 15;
const lower = Array.from({ length: STEPS + 1 }, (_, k) => {
  const t = k / STEPS;
  const mid = 1 - Math.pow(1 - t, 1.55);
  return bandA.map(([x, y], i) => {
    const c = Math.max(0, 1 - Math.abs(i - 8) / 5);
    const u = t + (mid - t) * c;
    const bulge = 4 * t * (1 - t) * (i === 0 ? -78 : i === 1 ? -60 : i === 2 ? -32 : i === 3 ? -12 : i === 13 ? 18 : i === 12 ? 14 : 0);
    return [x + (bandB[i][0] - x) * u + bulge, y + (bandB[i][1] - y) * u];
  });
});

/* Tightly packed bands near the silhouette. */
const edgeL = Array.from({ length: 7 }, (_, k) => {
  const y0 = 950 + k * 120;
  const p = outline.filter(([x, y]) => x < 620 && y > y0 && y < y0 + 560).map(([x, y]) => [x + 4 + (y - y0) * 0.04, y]);
  return p.reverse();
});
const edgeR = Array.from({ length: 10 }, (_, k) => {
  const y0 = 500 + k * 120;
  return outline.filter(([x, y]) => x > 1100 && y > y0 && y < y0 + 560).map(([x, y]) => [x - 4 - (y - y0) * 0.05, y]);
});

const rings = [
  { w: 2.2, p: [[825, 2150], [858, 2105], [900, 2088], [955, 2080], [1010, 2088], [1045, 2105], [1050, 2140], [1035, 2160], [960, 2213], [920, 2222], [890, 2210], [840, 2175]] },
  { w: 1.4, p: [[730, 2150], [740, 2125], [800, 2080], [900, 2043], [960, 2040], [1040, 2050], [1110, 2080], [1135, 2110], [1120, 2150], [1060, 2205], [980, 2255], [930, 2270], [885, 2268], [850, 2240], [790, 2215], [740, 2175]] },
  { w: 1, p: [[648, 2150], [665, 2128], [740, 2088], [870, 2038], [950, 2022], [1060, 2033], [1180, 2070], [1186, 2098], [1150, 2160], [1080, 2225], [980, 2288], [910, 2298], [850, 2275], [720, 2215], [660, 2180]] },
  { w: 1, d: "3 2", p: [[578, 2125], [600, 2104], [700, 2072], [860, 2015], [950, 2004], [1080, 2016], [1190, 2050], [1215, 2090], [1170, 2170], [1080, 2255], [970, 2312], [900, 2316], [830, 2298], [700, 2235], [600, 2170]] },
];
const feet = [
  [[560, 2160], [640, 2225], [780, 2295], [860, 2324], [940, 2326], [1060, 2278], [1170, 2185], [1240, 2075]],
  [[580, 2195], [680, 2262], [800, 2318], [880, 2338], [950, 2334], [1060, 2290], [1190, 2165]],
  [[655, 2060], [760, 2035], [880, 1992], [960, 1983], [1080, 1998], [1160, 2025]],
];

function smooth(p, closed) {
  const n = p.length;
  const at = (i) => (closed ? p[(i + n) % n] : p[Math.min(n - 1, Math.max(0, i))]);
  let d = `M${p[0][0]} ${p[0][1]}`;
  const end = closed ? n : n - 1;
  for (let i = 0; i < end; i++) {
    const [a, b, c, e] = [at(i - 1), at(i), at(i + 1), at(i + 2)];
    const f = (v) => Math.round(v * 10) / 10;
    d += `C${f(b[0] + (c[0] - a[0]) / 6)} ${f(b[1] + (c[1] - a[1]) / 6)} ${f(c[0] - (e[0] - b[0]) / 6)} ${f(c[1] - (e[1] - b[1]) / 6)} ${f(c[0])} ${f(c[1])}`;
  }
  return closed ? d + "Z" : d;
}

function Body() {
  const shape = smooth(outline, true);
  const ve = { vectorEffect: "non-scaling-stroke" };
  return (
    <svg width="640" height="810" viewBox="0 0 1568 2430" preserveAspectRatio="none" fill="none" aria-label="实体模型" role="img">
      <defs>
        <clipPath id="egg"><path d={shape} /></clipPath>
        <linearGradient id="hz" gradientUnits="userSpaceOnUse" x1="200" y1="1400" x2="1400" y2="1250">
          <stop offset="0" stopColor="#5a7482" />
          <stop offset="0.130" stopColor="#6d8998" />
          <stop offset="0.280" stopColor="#9abfd2" />
          <stop offset="0.370" stopColor="#add2e6" />
          <stop offset="0.500" stopColor="#a3cbe0" />
          <stop offset="0.640" stopColor="#bfe7fb" />
          <stop offset="0.740" stopColor="#b2d6e8" />
          <stop offset="0.840" stopColor="#8fb0c0" />
          <stop offset="1" stopColor="#6f8a98" />
        </linearGradient>
        <linearGradient id="topv" gradientUnits="userSpaceOnUse" x1="0" y1="85" x2="0" y2="1150">
          <stop offset="0" stopColor="#8fb4c7" />
          <stop offset="0.350" stopColor="#98bed2" stopOpacity="0.900" />
          <stop offset="0.650" stopColor="#a0c8dd" stopOpacity="0.450" />
          <stop offset="1" stopColor="#a4cce1" stopOpacity="0" />
        </linearGradient>
        <linearGradient id="botv" gradientUnits="userSpaceOnUse" x1="0" y1="1480" x2="0" y2="2357">
          <stop offset="0" stopColor="#7f9dad" stopOpacity="0" />
          <stop offset="0.400" stopColor="#7694a4" stopOpacity="0.700" />
          <stop offset="0.650" stopColor="#627d8b" stopOpacity="0.950" />
          <stop offset="1" stopColor="#4e6470" />
        </linearGradient>
        <radialGradient id="core" gradientUnits="userSpaceOnUse" cx="0" cy="0" r="1" gradientTransform="translate(830 760) scale(480 1000)">
          <stop offset="0" stopColor="#fff" />
          <stop offset="0.550" stopColor="#fff" />
          <stop offset="1" stopColor="#000" />
        </radialGradient>
        <mask id="coreMask" maskUnits="userSpaceOnUse" x="0" y="0" width="1568" height="2430">
          <rect width="1568" height="2430" fill="url(#core)" />
        </mask>
        <filter id="b30" x="-60%" y="-60%" width="220%" height="220%"><feGaussianBlur stdDeviation="34" /></filter>
        <filter id="b14" x="-30%" y="-60%" width="160%" height="220%"><feGaussianBlur stdDeviation="16" /></filter>
      </defs>
      <g clipPath="url(#egg)">
        <rect width="1568" height="2430" fill="url(#hz)" />
        <rect width="1568" height="1160" fill="url(#topv)" />
        <rect y="1480" width="1568" height="950" fill="url(#botv)" />
        <path d={shape} stroke="#587380" strokeWidth="60" opacity="0.600" filter="url(#b30)" />
        <ellipse cx="995" cy="1490" rx="42" ry="210" fill="#d6ffff" filter="url(#b30)" />
        <ellipse cx="1000" cy="1820" rx="90" ry="80" fill="#a2cbe0" opacity="0.600" filter="url(#b30)" />
        <path d="M540 2110C700 2030 840 1960 960 1958s200 40 300 100v60c-90-50-190-100-300-105s-270 70-420 130z" fill="#455963" opacity="0.800" filter="url(#b14)" />
        <ellipse cx="930" cy="2150" rx="170" ry="70" fill="#7f9eae" opacity="0.700" filter="url(#b30)" />
        <g stroke="#050505" strokeLinejoin="round">
          {bands.map((b, i) => (
            <path key={i} d={smooth(b.p)} strokeWidth="1" strokeDasharray={b.d} style={ve} />
          ))}
          <g mask="url(#coreMask)">
            {bands.map((b, i) => (
              <path key={i} d={smooth(b.p)} strokeWidth={b.w} strokeDasharray={b.d} style={ve} />
            ))}
          </g>
          {lower.map((p, i) => (
            <path key={i} d={smooth(p)} strokeWidth={i < 5 ? 1.2 : 1} strokeDasharray={i > 8 ? "4 2 2 2" : undefined} style={ve} />
          ))}
          {rings.map((r, i) => (
            <path key={i} d={smooth(r.p, true)} strokeWidth={r.w} strokeDasharray={r.d} style={ve} />
          ))}
          {feet.map((p, i) => (
            <path key={i} d={smooth(p)} strokeWidth="1" strokeDasharray="3 2" style={ve} />
          ))}
          {[...edgeL, ...edgeR].filter((p) => p.length > 2).map((p, i) => (
            <path key={i} d={smooth(p)} strokeWidth="1" strokeDasharray={i % 2 ? "1 4" : "1 3"} opacity="0.8" style={ve} />
          ))}
        </g>
      </g>
    </svg>
  );
}

function Wcs() {
  return (
    <svg width="80" height="90" viewBox="0 0 80 90" fontSize="13" fontFamily="Liberation Sans, sans-serif" aria-hidden="true">
      <path d="M54 15l3 16v26l-3-20-2-6z" fill="#a9c2ff" stroke="#6f8fe8" strokeWidth="0.700" />
      <path d="M52 28h5" stroke="#334" />
      <path d="M5 68l18-3 30 1-30 3z" fill="#f5a3a3" stroke="#d97070" strokeWidth="0.700" />
      <path d="M60 64l4-10 8-6-3 9z" fill="#4c6a4a" stroke="#334a33" strokeWidth="0.600" />
      <text x="58" y="11" fill="#2450f0">ZC</text>
      <text x="54" y="47" fill="#259030">YC</text>
      <text x="5" y="83" fill="#e03a3a">XC</text>
    </svg>
  );
}

function Triad() {
  return (
    <svg width="130" height="125" viewBox="370 1175 130 125" fontSize="12" fontFamily="Liberation Sans, sans-serif" fill="none" aria-hidden="true">
      <path d="M445 1240l41-2 5 40-41 2zM445 1240l-9 13 5 40 40-1 10-14M450 1280l-9 13" stroke="#a9a9a9" />
      <path d="M458 1239l-2-26-4 1 3-19 7 18-3 0 3 26z" fill="#0d52f5" />
      <path d="M443 1264v5l-31 1v3l-19-5 19-6v3z" fill="#d92c2c" stroke="#8a1a1a" strokeWidth="0.500" />
      <path d="M466 1257l5-6v-4l8-4 1 9-5 1-6 8-3-1z" fill="#1d5a1d" stroke="#123f12" />
      <text x="450" y="1192" fill="#2a50ff">Z</text>
      <text x="379" y="1272" fill="#d83a3a">X</text>
      <text x="477" y="1243" fill="#2e9a2e">Y</text>
    </svg>
  );
}

function Viewport() {
  return (
    <main className="flex min-w-0 flex-1 flex-col bg-white">
      <div className="flex h-[27px] items-stretch border-b-2 border-[#006488] text-[12px] text-[#1c1c1c]">
        <button type="button" className="flex w-[96px] items-center gap-1 pl-[6px]">
          <Svg size={16} box={16}>
            <path d="M1 2l4 1 4-2v6M15 2l-3-1v13M1 2v8M1 14c0-3 2-6 5-6s4 3 2 5-6 2-7 1zM4 13c0-2 1-3 3-3M9 8v6h6V2" stroke="#333" />
          </Svg>
          发现中心
        </button>
        <div className="flex w-[135px] items-center bg-[#006488] pl-[6px] text-white">
          <Bracket size={15} />
          <button type="button" className="ml-[5px] mr-[5px] w-[73px] text-left font-['Open_Sans'] text-[12px]">8_igs_igs.prt</button>
          <Svg size={11} box={12}><path d="M8 1H1v10h7V9M8 1l1 2M5 6l5-2 1 2-4 4z" stroke="#fff" strokeWidth="1.600" /></Svg>
          <button type="button" aria-label="关闭部件" className="ml-[5px]">
            <Svg size={9} box={10}><path d="M1 1l8 8M9 1L1 9" stroke="#fff" strokeWidth="2.200" /></Svg>
          </button>
        </div>
      </div>
      <div className="relative flex-1 overflow-hidden border-b-2 border-[#dcdcdc]">
        <div className="absolute left-[844px] top-[324px]"><Body /></div>
        <div className="absolute left-[1108px] top-[665px]"><Wcs /></div>
        <div className="absolute bottom-[75px] left-[14px]"><Triad /></div>
      </div>
    </main>
  );
}

/* ---------- right tool strip ---------- */

function Strip() {
  const items = [
    ["隐藏", <EyeOff />],
    ["编辑参数", <FeatureWrench size={24} className={CRISP} />],
    ["拉伸", <Extrude size={24} className={CRISP} />],
    ["通过曲线网格", <Mesh size={24} className={CRISP} />],
    ["镜像特征", <Mirror size={24} className={CRISP} />],
    ["编辑草图", <SketchWrench size={24} className={CRISP} />],
    ["直线", <Svg size={24}><path d="M1 31L31 1" stroke={CY} strokeWidth="1.800" /></Svg>],
    ["移动面", <MoveFace size={24} />],
    ["基准平面", <Svg size={24}><path d="M1 16l15-8 15 8-15 8z" fill="#f6c3d4" stroke="#d65f8a" /></Svg>],
    ["圆", <Svg size={24}><circle cx="16" cy="16" r="14.500" stroke={CY} strokeWidth="1.800" /></Svg>],
  ];
  return (
    <div className="flex w-9 shrink-0 flex-col items-center bg-white">
      <div className="h-[27px] w-full shrink-0 pt-2" />
      <div className="-mt-[19px] flex w-full flex-col items-center">
        {items.map(([label, icon]) => (
          <button key={label} type="button" aria-label={label} className="flex h-8 w-full items-center justify-center">
            {icon}
          </button>
        ))}
        <span className="mt-[5px] h-px w-[27px] bg-[#cfcfcf]" />
      </div>
      <button type="button" aria-label="展开" className="mb-[7px] mr-[16px] mt-auto">
        <svg width="3" height="5" viewBox="0 0 3 5" aria-hidden="true"><path d="M3 0v5L0 2.500z" fill="#111" /></svg>
      </button>
    </div>
  );
}

/* ---------- desktop task bar ---------- */

function Task({ icon, label, pad = "pl-[7px]", width = "w-[152px]", gap = "gap-1", active }) {
  return (
    <button
      type="button"
      className={`flex h-10 shrink-0 items-center border-b-2 border-[#76b9ed] pt-[2px] text-[12px] ${active ? "bg-[#4b4c4a]" : ""} ${width} ${pad} ${gap}`}
    >
      {icon}
      <span className="whitespace-nowrap">{label}</span>
    </button>
  );
}
function Pin({ label, children, className = "w-[49px]" }) {
  return (
    <button type="button" aria-label={label} className={`flex h-10 shrink-0 items-center justify-center ${className}`}>
      {children}
    </button>
  );
}
const Bili = () => (
  <Svg size={24} box={24}>
    <rect width="24" height="24" rx="5" fill="#fb5f93" />
    <path d="M4 8v8h2c2 0 2-3 0-3H4M9.500 11v5M12 8v8M14 8v8h2c2 0 2-3 0-3h-2M20 8v8" stroke="#fff" strokeWidth="1.500" />
  </Svg>
);

function Taskbar() {
  return (
    <footer className="relative flex h-10 items-center bg-[#1f201e] text-white">
      <Pin label="开始" className="w-[46px]">
        <Svg size={17} box={17}><path d="M0 2.500L7.500 1.500V8H0zM8.500 1.300L17 0v8H8.500zM0 9h7.500v6.500L0 14.500zM8.500 9H17v8l-8.500-1.300z" fill="#fff" /></Svg>
      </Pin>
      <label className="flex h-10 w-[344px] items-center gap-3 border border-[#bdbdbd] bg-[#f2f2f2] pl-3">
        <Svg size={16} box={16}><circle cx="10" cy="6" r="5" stroke="#222" /><path d="M6.500 9.500L1 15" stroke="#222" /></Svg>
        <input
          aria-label="搜索"
          placeholder="在此键入进行搜索"
          className="min-w-0 flex-1 bg-transparent text-[14px] text-black outline-none placeholder:text-[#3c3c3c]"
        />
      </label>
      <Pin label="任务视图" className="w-[50px]">
        <Svg size={17} box={17}><path d="M1 1v2h9V1M1 16v-2h9v2M1 6h9v5H1zM14 1v2M14 8v8M13 5h2v2h-2z" stroke="#fff" /></Svg>
      </Pin>
      <Pin label="桌面">
        <Svg size={22} box={22}><path d="M0 3h22v16H0z" fill="#1a9cf0" /><path d="M0 16L22 5v14H0z" fill="#35b0fa" /></Svg>
      </Pin>
      <Pin label="记事本">
        <Svg size={24} box={24}><path d="M8 3h13l-5 18H2z" fill="#9cc7cb" /><path d="M8 3h9L10 19H2z" fill="#c3e2e3" /><path d="M21 3l1 15-6 3z" fill="#5b8084" /></Svg>
      </Pin>
      <Pin label="远程桌面">
        <Svg size={24} box={24}><path d="M4 2l14 2v11L5 12z" fill="#3aa5e8" /><path d="M10 14l5 2-1 3-7-2z" fill="#ccc" /><path d="M1 17l15 3 5-2 1 3-6 3L1 19z" fill="#d6dde2" /></Svg>
      </Pin>
      <Pin label="Chrome">
        <Svg size={24} box={24}>
          <circle cx="12" cy="12" r="12" fill="#fbc116" />
          <path d="M12 12L1.600 6A12 12 0 0 1 22.400 6z" fill="#e33b2e" />
          <path d="M1.600 6A12 12 0 0 0 12 24l5-9-5-3z" fill="#2ba24c" />
          <path d="M22.400 6H12v6l5 3-5 9A12 12 0 0 0 22.400 6z" fill="#fbc116" />
          <circle cx="12" cy="12" r="5.600" fill="#fff" /><circle cx="12" cy="12" r="4.400" fill="#3b7ded" />
        </Svg>
      </Pin>
      <Pin label="迅雷">
        <Svg size={24} box={24}><rect width="24" height="24" rx="4" fill="#3b80f6" /><path d="M3 5c5 0 7 2 8 5 1-3 4-6 9-6-1 3-1 4-2 6 1 1 2 2 3 2-3 5-6 9-12 9 1-2 2-3 2-4-4-1-6-4-8-12z" fill="#fff" /></Svg>
      </Pin>
      <Pin label="Edge">
        <Svg size={24} box={24}>
          <circle cx="12" cy="12" r="12" fill="#1577c8" />
          <path d="M0 11C2-3 24-4 24 10c0 5-6 7-9 5 3-4-1-8-6-8C4 7 1 9 0 11z" fill="#42cf8c" />
          <path d="M0 11c3-5 10-4 11-1-4 2-3 8 1 11 3 2 7 1 10-2-5 8-22 7-22-8z" fill="#1a64b8" />
          <path d="M11 10c-4 2-2 8 3 9 4 1 7 0 8-1l-5 1c-6 0-8-5-6-9z" fill="#1f201e" />
        </Svg>
      </Pin>
      <span className="w-1 shrink-0" />
      <Task
        label="【新提醒】提示信..."
        gap="gap-[2px]"
        icon={<Svg size={24} box={24}><circle cx="12" cy="12" r="12" fill="#fff" /><circle cx="12" cy="12" r="8" stroke="#2f6bff" strokeWidth="4" /><path d="M12 12v5l5-5z" fill="#2f6bff" /></Svg>}
      />
      <Pin label="WPS" className="w-[59px]">
        <Svg size={24} box={22}><path d="M0 3h6l2 9 3-9h4l1 9 3-9h3l-5 16h-4l-2-8-3 8H5z" fill="#f0401c" /><path d="M6 3l4 14M14 5l3 11" stroke="#b01e0c" strokeWidth="1" /></Svg>
      </Pin>
      <Task
        label="精卫 - 30年前，50..."
        gap="gap-[2px]"
        icon={<Svg size={24} box={24}><rect width="24" height="24" rx="5" fill="#f5100f" /><path d="M14 8c-8-1-8 9-2 9 5 0 3-5 1-12 1-2 3-1 3-1M9 6C2 9 4 20 12 20c8 0 9-9 3-11" stroke="#fff" strokeWidth="1.700" /></Svg>}
      />
      <span className="w-2 shrink-0" />
      <Task
        label="微信"
        pad="pl-[5px]"
        icon={<Svg size={24} box={24}><ellipse cx="9" cy="9" rx="9" ry="8" fill="#3ddc6c" /><path d="M3 14l0 5 5-3z" fill="#3ddc6c" /><ellipse cx="17" cy="16" rx="7" ry="6" fill="#f2f2f2" /><circle cx="6" cy="7" r="1.100" fill="#187a38" /><circle cx="12" cy="7" r="1.100" fill="#187a38" /><circle cx="15" cy="15" r="0.900" fill="#777" /><circle cx="19" cy="15" r="0.900" fill="#777" /></Svg>}
      />
      <span className="w-1 shrink-0" />
      <Task
        label="NX - 建模"
        active
        width="w-[161px]"
        pad="pl-[11px]"
        icon={
          <span className="flex h-6 w-6 items-center justify-center border-b-2 border-l-2 border-[#0aa3a3] bg-[#9a1010] font-['Open_Sans'] text-[11px] font-bold">
            NX
          </span>
        }
      />
      <span className="w-[5px] shrink-0" />
      <Task label="哔哩哔哩 (゜-゜)つ..." pad="pl-[4px]" icon={<Bili />} />
      <span className="w-2 shrink-0" />
      <Task label="UG/NX曲面实例教..." pad="pl-[4px]" icon={<Bili />} />
      <div className="ml-auto flex items-center">
        <Pin label="显示隐藏的图标" className="w-6"><Svg size={12} box={12}><path d="M1 9l5-5 5 5" stroke="#fff" /></Svg></Pin>
        <Pin label="云盘" className="w-6"><Svg size={17} box={17}><path d="M1 10c0-5 3-7 8-7s8 3 8 7c0 6-14 7-16 0z" fill="#a8a8a8" /><path d="M1 10c3-3 11 0 16 0-1 6-14 6-16 0z" fill="#f5f5f5" /></Svg></Pin>
        <Pin label="网络" className="w-6"><Svg size={15} box={16}><path d="M1 14C1 7 7 1 15 1M5 14c0-5 4-9 10-9M9 14c0-3 2-5 6-5" stroke="#fff" /><circle cx="14" cy="14" r="1" fill="#fff" /></Svg></Pin>
        <Pin label="音量" className="w-6"><Svg size={15} box={16}><path d="M1 6h3l4-4v12l-4-4H1zM10 6c1 1 1 3 0 4M12 4c2 2 2 6 0 8M14 2c3 3 3 9 0 12" stroke="#fff" /></Svg></Pin>
        <span className="w-6 text-center text-[16px] leading-5">中</span>
        <div className="flex w-[74px] flex-col items-center font-['Open_Sans'] text-[12px] leading-[19px]">
          <time>20:53</time>
          <time>2025/6/20</time>
        </div>
        <span className="mr-1 h-10 w-px bg-[#5c5c5c]" />
      </div>
      <p className="absolute right-[6px] top-[15px] whitespace-pre font-['Liberation_Mono','Noto_Sans_CJK_SC'] text-[14px] leading-6 text-[#cfcfcf]">
        UG爱好者论坛 WWW.UGSNX.COM
      </p>
    </footer>
  );
}

export default function App() {
  return (
    <div className="flex h-screen min-h-[700px] flex-col overflow-hidden bg-white font-['Noto_Sans','Noto_Sans_CJK_SC',sans-serif]">
      <Defs />
      <header className="shrink-0 bg-linear-to-r from-[#006488] to-[#057aa8] text-white">
        <TitleBar />
        <MenuTabs />
      </header>
      <Ribbon />
      <div className="flex min-h-0 flex-1">
        <Rail />
        <Navigator />
        <Viewport />
        <Strip />
      </div>
      <div className="h-[22px] shrink-0 border-t border-[#a0a0a0] pl-[1px] text-[11px] font-bold leading-[20px] text-[#111]">
        选择对象并使用 MB3，或者双击某一对象
      </div>
      <Taskbar />
    </div>
  );
}
